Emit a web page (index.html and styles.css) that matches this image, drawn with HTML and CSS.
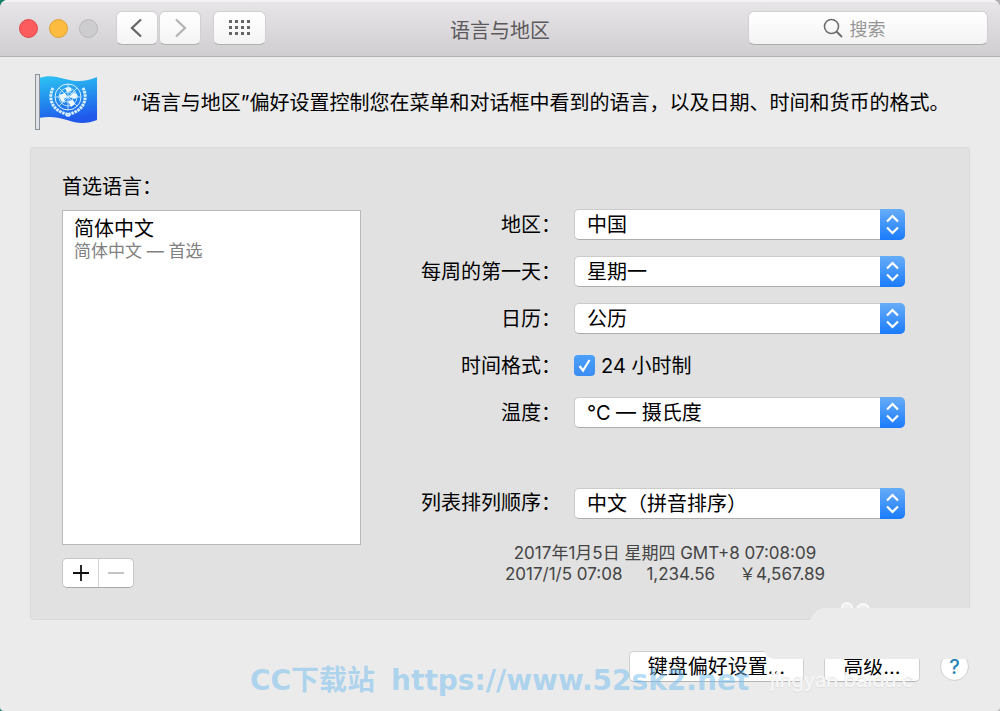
FILE: index.html
```html
<!DOCTYPE html>
<html lang="zh-CN">
<head>
<meta charset="utf-8">
<title>语言与地区</title>
<link rel="stylesheet" href="styles.css">
</head>
<body>
<div class="window">
  <header class="titlebar">
    <div class="controls">
      <div class="lights">
        <button class="light light-close" aria-label="关闭"></button>
        <button class="light light-min" aria-label="最小化"></button>
        <button class="light light-zoom" aria-label="缩放"></button>
      </div>
      <div class="nav">
        <button class="tool tool-nav" aria-label="后退"><svg width="14" height="20" viewBox="0 0 14 20"><path d="M11 1.500 2 10l9 8.500" fill="none" stroke="#666" stroke-width="2.300"/></svg></button>
        <button class="tool tool-nav" aria-label="前进"><svg width="14" height="20" viewBox="0 0 14 20"><path d="M3 1.500 12 10l-9 8.500" fill="none" stroke="#b4b4b4" stroke-width="2.300"/></svg></button>
      </div>
      <button class="tool tool-grid" aria-label="显示全部"><svg width="22" height="16" viewBox="0 0 22 16" fill="#666"><path d="M0 0h3v3H0zM6 0h3v3H6zM12 0h3v3h-3zM18 0h3v3h-3zM0 6h3v3H0zM6 6h3v3H6zM12 6h3v3h-3zM18 6h3v3h-3zM0 12h3v3H0zM6 12h3v3H6zM12 12h3v3h-3zM18 12h3v3h-3z"/></svg></button>
    </div>
    <h1 class="title">语言与地区</h1>
    <label class="search">
      <svg width="20" height="20" viewBox="0 0 20 20" fill="none" stroke="#6e6e6e" stroke-width="1.600"><circle cx="8.500" cy="8.500" r="7"/><path d="M13.500 13.500 19 19" stroke-width="2"/></svg>
      <input class="search-input" type="text" placeholder="搜索" aria-label="搜索">
    </label>
  </header>

  <section class="intro">
    <svg class="flag" width="66" height="60" viewBox="0 0 66 60">
      <defs><linearGradient id="sky" x1="0" y1="0" x2="0.200" y2="1"><stop offset="0" stop-color="#2ec4f3"/><stop offset="0.500" stop-color="#2391ee"/><stop offset="1" stop-color="#2058ec"/></linearGradient></defs>
      <path d="M5 5c9-3 16-2 26 1 11 3 21 3 32-2v43c-10 4-19 4-30 0-10-3-18-4-28-2z" fill="url(#sky)"/>
      <rect x="1.500" y="1.500" width="4" height="55" fill="#e0e4e8" stroke="#8c929a"/>
      <g fill="none" stroke="#d9f2ff">
        <circle cx="34" cy="24" r="13" stroke-width="1"/><circle cx="34" cy="24" r="9" stroke-width=".8"/><circle cx="34" cy="24" r="5" stroke-width=".8"/>
        <path d="M21 24h26M34 11v26M25 15l18 18M43 15 25 33" stroke-width=".8"/>
        <path d="M19 15c-5 10-1 20 8 24 3 2 6 1 9 4M49 15c5 10 1 20-8 24-3 2-6 1-9 4" stroke-width="3" stroke-dasharray="2.500 .8"/>
      </g>
      <path d="m25 22 6-2 2 4-3 2 1 4-4-2zM35 24l5-5 4 4-3 3-3-1zM34 28l5-1 2 4-4 3zM31 15l5-1 2 4-5 1z" fill="#e9f8ff"/>
    </svg>
    <p class="intro-text">“语言与地区”偏好设置控制您在菜单和对话框中看到的语言，以及日期、时间和货币的格式。</p>
  </section>

  <main class="panel">
    <section class="languages">
      <h2 class="list-label" id="preferred">首选语言：</h2>
      <ul class="list" aria-labelledby="preferred">
        <li class="item"><span class="item-name">简体中文</span><span class="item-note">简体中文 — 首选</span></li>
      </ul>
      <div class="stepper">
        <button class="step" aria-label="添加"><svg width="18" height="18" viewBox="0 0 18 18"><path d="M1 9h16M9 1v16" stroke="#111" stroke-width="1.800"/></svg></button>
        <button class="step" aria-label="移除"><svg width="18" height="18" viewBox="0 0 18 18"><path d="M1 9h16" stroke="#b0b0b0" stroke-width="1.500"/></svg></button>
      </div>
    </section>

    <form class="form">
      <label class="label" for="region">地区：</label>
      <div class="popup"><select class="select" id="region"><option>中国</option></select><svg class="arrows" viewBox="0 0 25 31"><path d="m7 12.500 5.500-5.500 5.500 5.500M7 18.500l5.500 5.500 5.500-5.500"/></svg></div>
      <label class="label" for="weekday">每周的第一天：</label>
      <div class="popup"><select class="select" id="weekday"><option>星期一</option></select><svg class="arrows" viewBox="0 0 25 31"><path d="m7 12.500 5.500-5.500 5.500 5.500M7 18.500l5.500 5.500 5.500-5.500"/></svg></div>
      <label class="label" for="calendar">日历：</label>
      <div class="popup"><select class="select" id="calendar"><option>公历</option></select><svg class="arrows" viewBox="0 0 25 31"><path d="m7 12.500 5.500-5.500 5.500 5.500M7 18.500l5.500 5.500 5.500-5.500"/></svg></div>
      <span class="label">时间格式：</span>
      <label class="check"><span class="tick"><input class="box" type="checkbox" checked><svg class="mark" width="21" height="21" viewBox="0 0 21 21"><path d="m5.500 11 3.500 4.500L15.500 5" fill="none" stroke="#fff" stroke-width="2.200"/></svg></span>24 小时制</label>
      <label class="label" for="temp">温度：</label>
      <div class="popup"><select class="select" id="temp"><option>°C — 摄氏度</option></select><svg class="arrows" viewBox="0 0 25 31"><path d="m7 12.500 5.500-5.500 5.500 5.500M7 18.500l5.500 5.500 5.500-5.500"/></svg></div>
      <label class="label label-order" for="order">列表排列顺序：</label>
      <div class="popup popup-order"><select class="select" id="order"><option>中文（拼音排序）</option></select><svg class="arrows" viewBox="0 0 25 31"><path d="m7 12.500 5.500-5.500 5.500 5.500M7 18.500l5.500 5.500 5.500-5.500"/></svg></div>
      <div class="sample">
        <p class="sample-line">2017年1月5日 星期四 GMT+8 07:08:09</p>
        <p class="sample-line sample-values"><span>2017/1/5 07:08</span><span>1,234.56</span><span>￥4,567.89</span></p>
      </div>
    </form>
  </main>

  <footer class="footer">
    <button class="button button-keyboard">键盘偏好设置...</button>
    <button class="button button-advanced">高级...</button>
    <button class="help" aria-label="帮助">?</button>
  </footer>

  <div class="patch">
    <svg class="paws" width="32" height="6" viewBox="0 0 32 6"><circle cx="8" cy="6" r="5" fill="#eee" stroke="#fafafa" stroke-width="2"/><circle cx="24" cy="8" r="6" fill="#eee" stroke="#fafafa" stroke-width="2"/></svg>
    <span class="patch-edge"></span>
    <span class="patch-text">jingyan.baidu.c</span>
  </div>
  <p class="mark-site"><span>CC下载站</span><span class="mark-url">https://www.52sk2.net</span></p>
</div>
</body>
</html>
```
FILE: styles.css
```css
* { box-sizing: border-box; }

body {
  margin: 0;
  background: linear-gradient(90deg, #16806a, #b0b0b4 50%);
  color: #000;
  font: 20px/30px Inter, "Noto Sans CJK SC", sans-serif;
}

h1, h2, p, ul { margin: 0; padding: 0; font: inherit; }
button, input, select { font: inherit; color: inherit; }
svg { display: block; flex: none; }

.window {
  position: relative;
  display: flex;
  flex-direction: column;
  min-height: 100vh;
  overflow: hidden;
  border-radius: 8px 8px 4px 4px;
  background: #ebebeb;
}

.titlebar {
  display: grid;
  grid-template-columns: 1fr auto 1fr;
  align-items: center;
  height: 57px;
  padding: 0 12px;
  border-bottom: 1px solid #b1b1b1;
  background: linear-gradient(#e9e6ea, #d0ced1);
  box-shadow: inset 0 2px #f3f2f4;
}

.controls { display: flex; align-items: center; padding-left: 7px; }
.lights { display: flex; gap: 11px; margin-right: 18px; }
.light {
  width: 19px;
  height: 19px;
  padding: 0;
  border: 1px solid #e0484a;
  border-radius: 50%;
  background: #fc5c5d;
}
.light-min { border-color: #e0a032; background: #fdbc40; }
.light-zoom { border-color: #b9b8ba; background: #cdccce; }

.nav { display: flex; gap: 1px; margin-right: 12px; }
.tool {
  display: grid;
  place-items: center;
  height: 34px;
  padding: 0;
  border: 1px solid #d0d0d0;
  border-bottom-color: #b0b0b0;
  border-radius: 6px;
  background: linear-gradient(#fff, #f4f4f4);
}
.tool-nav { width: 42px; }
.tool-grid { width: 53px; }

.title { padding-top: 5px; color: #5c595c; }

.search {
  display: flex;
  align-items: center;
  justify-content: center;
  gap: 7px;
  justify-self: end;
  width: 240px;
  height: 34px;
  padding-right: 24px;
  border: 1px solid #d0d0d0;
  border-bottom-color: #adadad;
  border-radius: 6px;
  background: linear-gradient(#fff, #f3f3f3);
}
.search-input {
  width: 40px;
  padding: 3px 0 0;
  border: 0;
  outline: 0;
  background: none;
  font-size: 18px;
}
.search-input::placeholder { color: #969696; opacity: 1; }

.intro {
  display: flex;
  align-items: center;
  gap: 32px;
  height: 90px;
  padding: 2px 30px 0 34px;
}

.panel {
  display: flex;
  gap: 32px;
  margin: 0 30px;
  padding: 24px 64px 31px 31px;
  border: 1px solid #dadada;
  border-radius: 3px;
  background: #e1e1e1;
}

.languages { width: 299px; }
.list {
  height: 335px;
  margin: 8px 0 13px;
  padding: 6px 11px;
  border: 1px solid #b9b9b9;
  background: #fff;
  list-style: none;
}
.item { display: flex; flex-direction: column; }
.item-name { line-height: 24px; }
.item-note { font-size: 17px; line-height: 20px; color: #808080; }

.stepper {
  display: flex;
  width: max-content;
  border: 1px solid #c6c6c6;
  border-bottom-color: #aaa;
  border-radius: 5px;
  background: #fff;
}
.step {
  display: grid;
  place-items: center;
  width: 35px;
  height: 28px;
  padding: 0;
  border: 0;
  background: none;
}
.step + .step { border-left: 1px solid #d4d4d4; }

.form {
  flex: 1;
  display: grid;
  grid-template-columns: 168px 1fr;
  grid-template-rows: repeat(5, 31px) 75px auto;
  align-content: start;
  gap: 16px 13px;
  padding-top: 37px;
}
.label { line-height: 32px; text-align: right; white-space: nowrap; }
.popup { display: grid; align-content: end; }
.popup > * { grid-area: 1 / 1; }
.select {
  width: 100%;
  height: 31px;
  padding: 0 12px;
  border: 1px solid #cbcbcb;
  border-bottom-color: #adadad;
  border-radius: 5px;
  background: #fff;
  appearance: none;
}
.arrows {
  justify-self: end;
  width: 25px;
  height: 31px;
  border-radius: 0 5px 5px 0;
  background: linear-gradient(#67adf8, #1a7bfb);
  fill: none;
  stroke: #fff;
  stroke-width: 2.2;
  pointer-events: none;
}
.check { display: flex; align-items: center; gap: 6px; }
.tick { display: grid; }
.tick > * { grid-area: 1 / 1; }
.box {
  width: 21px;
  height: 21px;
  margin: 0;
  border-radius: 4px;
  background: linear-gradient(#4ba0f8, #3b8df2);
  appearance: none;
}
.mark { pointer-events: none; }
.label-order { align-self: end; }
.sample {
  grid-column: 1 / -1;
  padding: 8px 0 0 32px;
  color: #444;
  font-size: 17px;
  line-height: 21px;
  text-align: center;
}
.sample-values { display: flex; justify-content: center; gap: 24px; }

.footer {
  display: flex;
  align-items: center;
  justify-content: flex-end;
  gap: 20px;
  padding: 31px 31px 24px;
}
.button {
  height: 31px;
  padding: 0;
  border: 1px solid #cfcfcf;
  border-bottom-color: #b5b5b5;
  border-radius: 5px;
  background: #fff;
  line-height: 28px;
}
.button-keyboard { width: 175px; }
.button-advanced { width: 96px; }
.help {
  width: 29px;
  height: 29px;
  padding: 0;
  border: 1px solid #cfcfcf;
  border-radius: 50%;
  background: #fff;
  color: #2a83b8;
  font-weight: 500;
  line-height: 26px;
}

.patch {
  position: absolute;
  right: 0;
  bottom: 52px;
  width: 190px;
  height: 51px;
  border-radius: 16px 0 0 0;
  background: #ebebeb;
}
.paws { position: absolute; left: 29px; top: -6px; }
.patch-edge {
  position: absolute;
  right: 190px;
  bottom: 0;
  width: 46px;
  height: 10px;
  border-radius: 0 0 0 10px;
  background: #ebebeb;
}
.patch-text {
  position: absolute;
  left: -40px;
  top: 62px;
  color: #f8f8f8;
  font-size: 20px;
  line-height: 20px;
  text-shadow: 0 1px 1px #dcdcdc;
}

.mark-site {
  position: absolute;
  left: 250px;
  bottom: 14px;
  display: flex;
  gap: 16px;
  color: rgba(120, 190, 240, 0.55);
  font: 700 28px/32px "DejaVu Sans", "Noto Sans CJK SC", sans-serif;
  white-space: nowrap;
  pointer-events: none;
}
```
